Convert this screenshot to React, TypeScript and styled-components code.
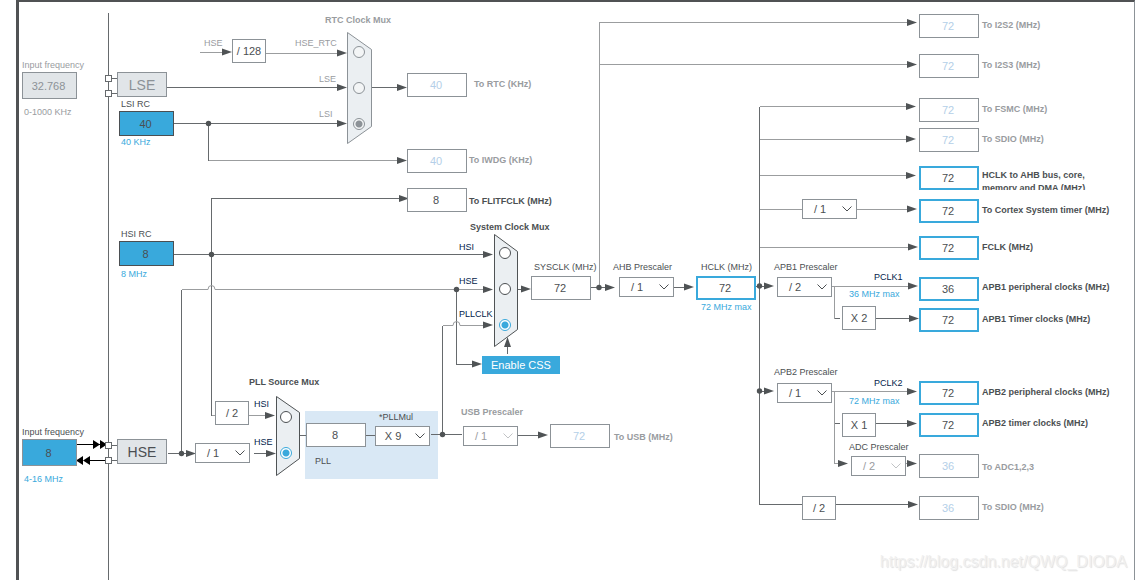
import React, { useState } from "react";
import styled, { createGlobalStyle, css } from "styled-components";

const color = {
  ink: "#4b4f52",
  navy: "#03234b",
  muted: "#999c9f",
  faint: "#b4cfe8",
  blue: "#39a9dc",
  border: "#8c9297",
  wire: "#666a6d",
  softWire: "#9b9d9f",
  head: "#4f5355",
  block: "#e1e5e8",
  mux: "#ebeff2",
  panel: "#d9e8f5",
};

const GlobalStyle = createGlobalStyle`
  *, *::before, *::after { box-sizing: border-box; }
  body { margin: 0; background: #fff; }
  body, button, input, select {
    font-family: "Liberation Sans", Arial, sans-serif;
  }
`;

/* ---------- page ---------- */

const Page = styled.main`
  position: relative;
  display: flex;
  min-height: 100vh;
  padding-left: 16px;
  overflow: hidden;
`;

const Frame = styled.div`
  flex: 1;
  border: solid #505254;
  border-width: 2px 0 0 3px;
  border-right: 1px solid ${color.border};
`;

const Wiring = styled.svg`
  position: absolute;
  inset: 0;
  width: 100%;
  height: 100%;
`;

const Watermark = styled.a`
  position: absolute;
  right: 8px;
  bottom: 8px;
  font-size: 16px;
  line-height: 20px;
  color: #f0f0f0;
  text-decoration: none;
  text-shadow: 1px 1px 1px #e0e0e0;
`;

/* ---------- diagram nodes ---------- */

type Place = { $x: number; $y: number };

const placed = css<Place>`
  position: absolute;
  left: ${(p) => p.$x}px;
  top: ${(p) => p.$y}px;
`;

type Tone = "ink" | "navy" | "muted" | "blue";

const caption = css<Place & { $tone: Tone; $bold?: boolean }>`
  ${placed}
  margin: 0;
  font-size: 9px;
  line-height: 13px;
  font-weight: ${(p) => (p.$bold ? 700 : 400)};
  color: ${(p) => color[p.$tone]};
  white-space: nowrap;
`;

const FieldLabel = styled.label<Place & { $tone: Tone; $bold?: boolean; $wrap?: boolean }>`
  ${caption}
  ${(p) =>
    p.$wrap &&
    css`
      width: 120px;
      height: 21px;
      overflow: hidden;
      white-space: normal;
    `}
`;

const Note = styled.span<Place & { $tone: Tone; $bold?: boolean }>`
  ${caption}
`;

const PllPanel = styled.section<Place>`
  ${placed}
  width: 133px;
  height: 68px;
  background: ${color.panel};
`;

type Look = "plain" | "key" | "off" | "source" | "external" | "externalOff";

const looks: Record<Look, ReturnType<typeof css>> = {
  plain: css`border: 1px solid ${color.border}; background: #fff; color: ${color.ink};`,
  key: css`border: 2px solid ${color.blue}; background: #fff; color: ${color.ink};`,
  off: css`border: 1px solid ${color.border}; background: #fff; color: ${color.faint};`,
  source: css`width: 55px; height: 25px; border: 1px solid ${color.ink}; background: ${color.blue}; color: ${color.ink};`,
  external: css`width: 55px; height: 27px; border: 1px solid ${color.border}; background: ${color.blue}; color: ${color.ink};`,
  externalOff: css`width: 55px; height: 27px; border: 1px solid ${color.border}; background: ${color.block}; color: ${color.border};`,
};

const Value = styled.input<Place & { $look: Look }>`
  ${placed}
  width: 60px;
  height: 24px;
  padding: 0 2px 0 0;
  border-radius: 0;
  font-size: 11px;
  text-align: center;
  ${(p) => looks[p.$look]}
`;

const Factor = styled.div<Place>`
  ${placed}
  display: flex;
  align-items: center;
  justify-content: center;
  width: 34px;
  height: 24px;
  border: 1px solid ${color.border};
  background: #fff;
  font-size: 11px;
  color: ${color.ink};
`;

const Oscillator = styled.button<Place & { $off?: boolean }>`
  ${placed}
  width: 50px;
  height: 25px;
  padding: 0;
  border: 1px solid ${color.border};
  background: ${color.block};
  font-size: 14px;
  color: ${(p) => (p.$off ? color.border : color.ink)};
`;

const CssButton = styled.button<Place>`
  ${placed}
  width: 78px;
  height: 18px;
  padding: 0;
  border: 0;
  background: ${color.blue};
  font-size: 11px;
  color: #fff;
`;

const Picker = styled.div<Place & { $off?: boolean }>`
  ${placed}
  display: grid;
  width: 55px;
  height: 20px;
  align-items: center;
  color: ${(p) => (p.$off ? color.muted : color.ink)};

  select,
  svg {
    grid-area: 1 / 1;
  }
  select {
    appearance: none;
    width: 100%;
    height: 100%;
    padding: 0 19px 0 0;
    border: 1px solid ${color.border};
    border-radius: 0;
    background: #fff;
    font-size: 11px;
    text-align-last: center;
    color: inherit;
    opacity: 1;
  }
  svg {
    justify-self: end;
    margin-right: 5px;
    pointer-events: none;
    opacity: ${(p) => (p.$off ? 0.6 : 1)};
  }
`;

const MuxBody = styled.div<Place & { $top: number; $left: number }>`
  ${placed}
  display: flex;
  flex-direction: column;
  gap: 24px;
  padding: ${(p) => p.$top}px 0 0 ${(p) => p.$left}px;
`;

const Choice = styled.input`
  appearance: none;
  width: 12px;
  height: 12px;
  margin: 0;
  border: 1px solid ${color.ink};
  border-radius: 50%;
  background: #fff;

  &:checked {
    border-color: ${color.blue};
    background: radial-gradient(circle, ${color.blue} 3px, #fff 4px);
  }
  &:disabled {
    border-color: ${color.border};
    background: #f3f5f6;
  }
  &:disabled:checked {
    background: radial-gradient(circle, ${color.border} 3px, #f3f5f6 4px);
  }
`;

/* ---------- node components ---------- */

type PrescalerProps = { id: string; x: number; y: number; value: string; label: string; off?: boolean };

function Prescaler({ id, x, y, value, label, off }: PrescalerProps) {
  const sign = value.slice(0, 1);
  const steps = sign === "X" ? [2, 3, 4, 5, 6, 7, 8, 9] : [1, 2, 4, 8, 16];
  return (
    <Picker $x={x} $y={y} $off={off}>
      <select id={id} aria-label={label} defaultValue={value} disabled={off}>
        {steps.map((n) => (
          <option key={n}>{`${sign} ${n}`}</option>
        ))}
      </select>
      <svg width="10" height="6" viewBox="0 0 10 6" fill="none" stroke="currentColor" aria-hidden="true">
        <path d="M0.5 0.5 5 5 9.5 0.5" />
      </svg>
    </Picker>
  );
}

type MuxProps = {
  name: string;
  x: number;
  y: number;
  top: number;
  left: number;
  inputs: string[];
  initial: string;
  off?: boolean;
};

function Mux({ name, x, y, top, left, inputs, initial, off }: MuxProps) {
  const [picked, setPicked] = useState(initial);
  return (
    <MuxBody $x={x} $y={y} $top={top} $left={left} role="radiogroup" aria-labelledby={name}>
      {inputs.map((source) => (
        <Choice
          key={source}
          type="radio"
          name={name}
          aria-label={source}
          checked={picked === source}
          disabled={off}
          onChange={() => setPicked(source)}
        />
      ))}
    </MuxBody>
  );
}

/* ---------- wiring ---------- */

const wires = [
  // crystal pins
  "M108.5 78.5H117", "M108.5 93.5H117", "M108.5 445.5H117", "M108.5 460.5H117",
  // low speed clocks
  "M167 87.5H340", "M174 123.5H340", "M208.5 123.5V160.5", "M371 87.5H400",
  // HSI
  "M174 254.5H486", "M211.5 415.5V198.5H400",
  // HSE
  "M168 453.5H188", "M181.5 453.5V289.5", "M254 453.5H268", "M456.5 289.5V364.5H475",
  // PLL
  "M299 435.5H306", "M366 435.5H375", "M431 434.5H462", "M442.5 434.5V325.5", "M518 435.5H540",
  // SYSCLK to HCLK
  "M507.5 354V345", "M517 289.5H525", "M591 287.5H607", "M674 287.5H686", "M756 286.5H766",
  // HCLK bus
  "M759.5 106.5V504.5H802", "M836 504.5H910", "M759.5 391.5H766",
  // APB timers
  "M834.5 318.5H840", "M876 318.5H910", "M834.5 423.5H840", "M876 423.5H910",
];

const softWires = [
  "M200 52.5H225", "M266 53.5H340", "M208.5 160.5H400",
  "M211.5 415.5H215", "M249 415.5H268",
  "M181.5 289.5H208", "M215 289.5H486",
  "M442.5 325.5H453", "M460 325.5H486",
  "M599.5 287V22.5H910", "M599.5 64.5H910",
  "M759.5 106.5H910", "M759.5 139.5H910", "M759.5 175.5H910",
  "M759.5 209.5H802", "M857 209.5H910", "M759.5 247.5H910",
  "M832 286.5H910", "M834.5 286.5V318.5",
  "M832 391.5H910", "M834.5 391.5V463.5H842", "M906 463.5H910",
];

const hops = ["M208 289.5a3.5 4 0 0 1 7 0", "M453 325.5a3.5 4 0 0 1 7 0"];

// tips of the arrowheads that point right
const heads: [number, number][] = [
  [232, 52], [347, 53], [347, 87.5], [347, 123.5], [407, 87.5], [407, 160.5], [409, 198.5],
  [493, 254.5], [493, 289.5], [493, 325], [482, 364], [531, 289], [615, 287.5], [694, 287],
  [275, 415.5], [276, 453.5], [196, 453.5], [548, 435],
  [774, 286], [774, 391], [917, 22.5], [917, 64.5], [916, 106.5], [916, 139], [916, 175.5],
  [917, 209], [918, 247], [918, 286], [919, 318.5], [917, 391.5], [917, 423.5], [848, 463.5],
  [917, 463.5], [918, 504.5],
];

const joints: [number, number][] = [
  [208.5, 123.5], [211.5, 254.5], [181.5, 453.5], [456.5, 289.5], [442.5, 434.5],
  [599, 287.5], [759.5, 286], [759.5, 391],
];

const muxShapes = [
  { points: "347.5,32.5 371.5,49.5 371.5,126.5 347.5,143.5", off: true },
  { points: "494.5,234.5 517.5,251.5 517.5,329.5 494.5,346.5" },
  { points: "276.5,396.5 299.5,412.5 299.5,458.5 276.5,475.5" },
];

const pins = [78, 93, 445, 460];

function Wires() {
  return (
    <Wiring aria-hidden="true">
      <g fill="none" shapeRendering="crispEdges">
        <path d={softWires.join("")} stroke={color.softWire} />
        <path d={wires.join("")} stroke={color.wire} />
        <line x1="108.5" y1="13" x2="108.5" y2="100%" stroke={color.wire} />
        <path d="M77 444.5H105M90 460.5H105" stroke="#000" />
      </g>
      <path d={hops.join("")} fill="none" stroke={color.softWire} />
      <g fill={color.head}>
        {heads.map(([x, y]) => (
          <path key={`${x}-${y}`} d={`M${x} ${y}l-10 -3.5v7z`} />
        ))}
        {joints.map(([x, y]) => (
          <circle key={`${x}-${y}`} cx={x} cy={y} r="2.7" />
        ))}
      </g>
      <path d="M100 444.5l-7 -4.5v9zM107 444.5l-7 -4.5v9zM76 460.5l7 -4.5v9zM83 460.5l7 -4.5v9z" fill="#000" />
      {pins.map((y) => (
        <rect key={y} x="105.5" y={y - 2.5} width="6" height="6" fill="#fff" stroke={color.wire} />
      ))}
      {muxShapes.map((m) => (
        <polygon key={m.points} points={m.points} fill={color.mux} stroke={m.off ? color.border : color.head} />
      ))}
      <path d="M507.5 337l-3.5 10h7z" fill={color.head} />
    </Wiring>
  );
}

/* ---------- outputs ---------- */

type Output = {
  id: string; x: number; y: number; value: string; look: Look;
  label: string; lx: number; ly: number; wrap?: boolean;
};

const outputs: Output[] = [
  { id: "rtc", x: 407, y: 73, value: "40", look: "off", label: "To RTC (KHz)", lx: 474, ly: 78 },
  { id: "iwdg", x: 407, y: 149, value: "40", look: "off", label: "To IWDG (KHz)", lx: 469, ly: 154 },
  { id: "flitf", x: 407, y: 188, value: "8", look: "plain", label: "To FLITFCLK (MHz)", lx: 469, ly: 195 },
  { id: "usb", x: 550, y: 424, value: "72", look: "off", label: "To USB (MHz)", lx: 614, ly: 431 },
  { id: "i2s2", x: 919, y: 14, value: "72", look: "off", label: "To I2S2 (MHz)", lx: 982, ly: 19 },
  { id: "i2s3", x: 919, y: 54, value: "72", look: "off", label: "To I2S3 (MHz)", lx: 982, ly: 59 },
  { id: "fsmc", x: 919, y: 98, value: "72", look: "off", label: "To FSMC (MHz)", lx: 982, ly: 103 },
  { id: "sdio", x: 919, y: 128, value: "72", look: "off", label: "To SDIO (MHz)", lx: 982, ly: 133 },
  { id: "ahb", x: 919, y: 166, value: "72", look: "key", label: "HCLK to AHB bus, core, memory and DMA (MHz)", lx: 982, ly: 169, wrap: true },
  { id: "cortex", x: 919, y: 199, value: "72", look: "key", label: "To Cortex System timer (MHz)", lx: 982, ly: 204 },
  { id: "fclk", x: 919, y: 236, value: "72", look: "key", label: "FCLK (MHz)", lx: 982, ly: 241 },
  { id: "apb1", x: 919, y: 277, value: "36", look: "key", label: "APB1 peripheral clocks (MHz)", lx: 982, ly: 281 },
  { id: "apb1t", x: 919, y: 308, value: "72", look: "key", label: "APB1 Timer clocks (MHz)", lx: 982, ly: 313 },
  { id: "apb2", x: 919, y: 381, value: "72", look: "key", label: "APB2 peripheral clocks (MHz)", lx: 982, ly: 386 },
  { id: "apb2t", x: 919, y: 413, value: "72", look: "key", label: "APB2 timer clocks (MHz)", lx: 982, ly: 417 },
  { id: "adc", x: 919, y: 454, value: "36", look: "off", label: "To ADC1,2,3", lx: 982, ly: 461 },
  { id: "sdio2", x: 919, y: 496, value: "36", look: "off", label: "To SDIO (MHz)", lx: 982, ly: 501 },
];

type Source = {
  id: string; x: number; y: number; value: string; look: Look;
  label: string; lx: number; ly: number; off?: boolean;
};

const sources: Source[] = [
  { id: "lseIn", x: 22, y: 72, value: "32.768", look: "externalOff", label: "Input frequency", lx: 22, ly: 59, off: true },
  { id: "hseIn", x: 22, y: 439, value: "8", look: "external", label: "Input frequency", lx: 22, ly: 426 },
  { id: "lsi", x: 119, y: 111, value: "40", look: "source", label: "LSI RC", lx: 121, ly: 98 },
  { id: "hsi", x: 119, y: 241, value: "8", look: "source", label: "HSI RC", lx: 121, ly: 228 },
  { id: "sysclk", x: 531, y: 276, value: "72", look: "plain", label: "SYSCLK (MHz)", lx: 534, ly: 261 },
  { id: "hclk", x: 696, y: 276, value: "72", look: "key", label: "HCLK (MHz)", lx: 701, ly: 261 },
];

const notes: { x: number; y: number; text: string; tone: Tone; bold?: boolean; id?: string }[] = [
  { x: 24, y: 106, text: "0-1000 KHz", tone: "muted" },
  { x: 24, y: 473, text: "4-16 MHz", tone: "blue" },
  { x: 121, y: 136, text: "40 KHz", tone: "blue" },
  { x: 121, y: 268, text: "8 MHz", tone: "blue" },
  { x: 204, y: 37, text: "HSE", tone: "muted" },
  { x: 295, y: 37, text: "HSE_RTC", tone: "muted" },
  { x: 319, y: 73, text: "LSE", tone: "muted" },
  { x: 319, y: 108, text: "LSI", tone: "muted" },
  { x: 325, y: 14, text: "RTC Clock Mux", tone: "muted", bold: true, id: "rtcMux" },
  { x: 470, y: 221, text: "System Clock Mux", tone: "ink", bold: true, id: "sysMux" },
  { x: 249, y: 376, text: "PLL Source Mux", tone: "ink", bold: true, id: "pllMux" },
  { x: 459, y: 241, text: "HSI", tone: "navy" },
  { x: 459, y: 275, text: "HSE", tone: "navy" },
  { x: 459, y: 308, text: "PLLCLK", tone: "navy" },
  { x: 254, y: 398, text: "HSI", tone: "navy" },
  { x: 254, y: 436, text: "HSE", tone: "navy" },
  { x: 315, y: 455, text: "PLL", tone: "ink" },
  { x: 701, y: 301, text: "72 MHz max", tone: "blue" },
  { x: 874, y: 271, text: "PCLK1", tone: "navy" },
  { x: 849, y: 288, text: "36 MHz max", tone: "blue" },
  { x: 874, y: 377, text: "PCLK2", tone: "navy" },
  { x: 849, y: 395, text: "72 MHz max", tone: "blue" },
];

const prescalerLabels: { x: number; y: number; text: string; target: string; tone: Tone; bold?: boolean }[] = [
  { x: 613, y: 261, text: "AHB Prescaler", target: "ahbPre", tone: "ink" },
  { x: 774, y: 261, text: "APB1 Prescaler", target: "apb1Pre", tone: "ink" },
  { x: 774, y: 366, text: "APB2 Prescaler", target: "apb2Pre", tone: "ink" },
  { x: 849, y: 441, text: "ADC Prescaler", target: "adcPre", tone: "ink" },
  { x: 379, y: 411, text: "*PLLMul", target: "pllMul", tone: "ink" },
  { x: 461, y: 406, text: "USB Prescaler", target: "usbPre", tone: "muted", bold: true },
];

const prescalers: PrescalerProps[] = [
  { id: "hseDiv", x: 195, y: 443, value: "/ 1", label: "HSE divider" },
  { id: "pllMul", x: 375, y: 426, value: "X 9", label: "PLLMul" },
  { id: "usbPre", x: 463, y: 426, value: "/ 1", label: "USB Prescaler", off: true },
  { id: "ahbPre", x: 619, y: 277, value: "/ 1", label: "AHB Prescaler" },
  { id: "cortexPre", x: 802, y: 199, value: "/ 1", label: "Cortex System timer prescaler" },
  { id: "apb1Pre", x: 777, y: 277, value: "/ 2", label: "APB1 Prescaler" },
  { id: "apb2Pre", x: 777, y: 383, value: "/ 1", label: "APB2 Prescaler" },
  { id: "adcPre", x: 851, y: 456, value: "/ 2", label: "ADC Prescaler", off: true },
];

const factors = [
  { x: 232, y: 39, text: "/ 128" },
  { x: 215, y: 401, text: "/ 2" },
  { x: 842, y: 306, text: "X 2" },
  { x: 842, y: 413, text: "X 1" },
  { x: 802, y: 496, text: "/ 2" },
];

export default function App() {
  return (
    <>
      <GlobalStyle />
      <Page>
        <Frame />
        <PllPanel $x={305} $y={411} />
        <Wires />

        {sources.map((s) => (
          <React.Fragment key={s.id}>
            <FieldLabel htmlFor={s.id} $x={s.lx} $y={s.ly} $tone={s.off ? "muted" : "ink"}>
              {s.label}
            </FieldLabel>
            <Value id={s.id} $x={s.x} $y={s.y} $look={s.look} defaultValue={s.value} disabled={s.off} />
          </React.Fragment>
        ))}

        <Oscillator type="button" $x={117} $y={72} $off disabled>LSE</Oscillator>
        <Oscillator type="button" $x={117} $y={439}>HSE</Oscillator>

        <Mux name="rtcMux" x={347} y={32} top={14} left={6} inputs={["HSE_RTC", "LSE", "LSI"]} initial="LSI" off />
        <Mux name="sysMux" x={494} y={234} top={13} left={5} inputs={["HSI", "HSE", "PLLCLK"]} initial="PLLCLK" />
        <Mux name="pllMux" x={276} y={396} top={15} left={4} inputs={["HSI", "HSE"]} initial="HSE" />

        <Value id="pllIn" aria-label="PLL input" $x={306} $y={423} $look="plain" defaultValue="8" readOnly />
        <CssButton type="button" $x={482} $y={356}>Enable CSS</CssButton>

        {prescalers.map((p) => (
          <Prescaler key={p.id} {...p} />
        ))}
        {prescalerLabels.map((l) => (
          <FieldLabel key={l.target} htmlFor={l.target} $x={l.x} $y={l.y} $tone={l.tone} $bold={l.bold}>
            {l.text}
          </FieldLabel>
        ))}
        {factors.map((f) => (
          <Factor key={`${f.x}-${f.y}`} $x={f.x} $y={f.y}>{f.text}</Factor>
        ))}
        {notes.map((n) => (
          <Note key={`${n.x}-${n.y}`} id={n.id} $x={n.x} $y={n.y} $tone={n.tone} $bold={n.bold}>
            {n.text}
          </Note>
        ))}

        {outputs.map((o) => (
          <React.Fragment key={o.id}>
            <Value id={o.id} $x={o.x} $y={o.y} $look={o.look} defaultValue={o.value} disabled={o.look === "off"} />
            <FieldLabel
              htmlFor={o.id}
              $x={o.lx}
              $y={o.ly}
              $tone={o.look === "off" ? "muted" : "ink"}
              $bold
              $wrap={o.wrap}
            >
              {o.label}
            </FieldLabel>
          </React.Fragment>
        ))}

        <Watermark href="https://blog.csdn.net/QWQ_DIODA">https://blog.csdn.net/QWQ_DIODA</Watermark>
      </Page>
    </>
  );
}
